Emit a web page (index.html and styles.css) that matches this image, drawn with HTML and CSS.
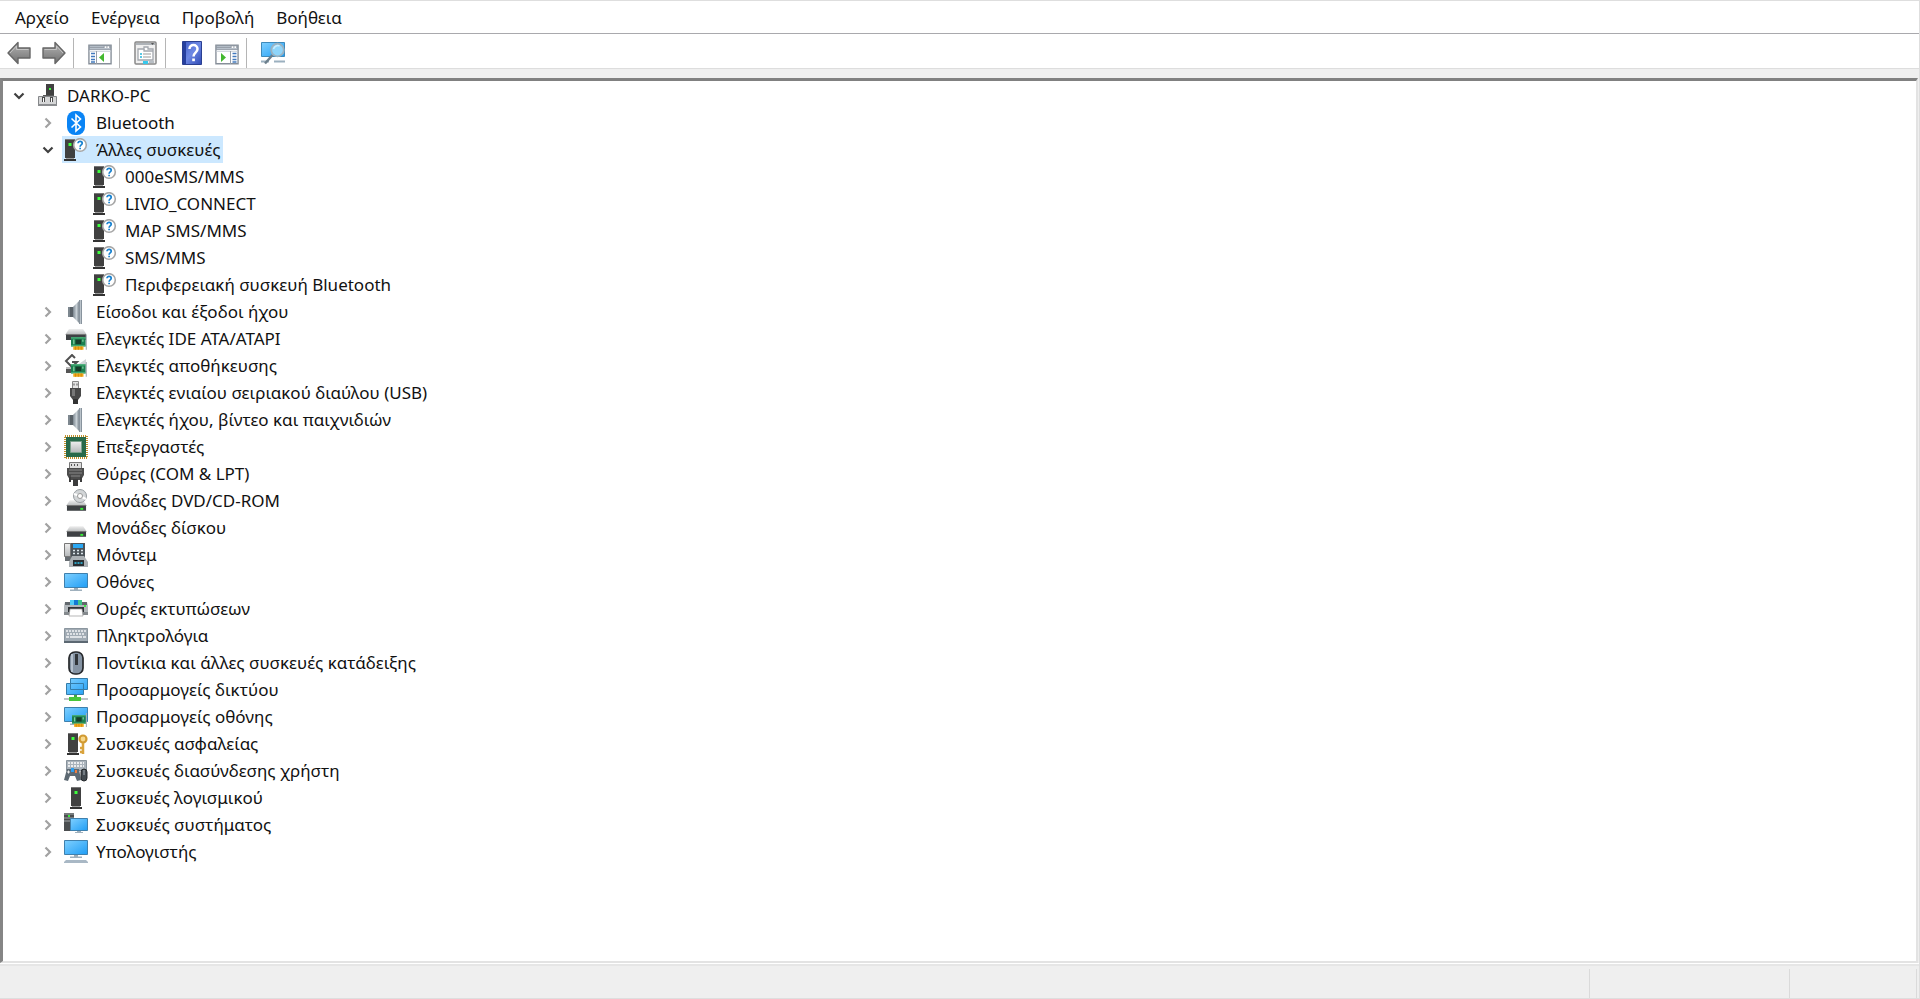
FILE: index.html
```
<!DOCTYPE html>
<html lang="el">

<head>
    <meta charset="UTF-8">
    <meta name="viewport" content="width=device-width, initial-scale=1.0">
    <title>Διαχείριση Συσκευών</title>
    <link rel="stylesheet" href="styles.css">
</head>

<body>

    <!-- shared shapes -->
    <svg class="defs" aria-hidden="true">
        <defs>
            <linearGradient id="blue" x1="0" y1="0" x2="1" y2="1">
                <stop offset="0" stop-color="#7fd0ff" />
                <stop offset="1" stop-color="#1f9df5" />
            </linearGradient>
            <linearGradient id="grey" x1="0" y1="0" x2="0" y2="1">
                <stop offset="0" stop-color="#b4b4b4" />
                <stop offset="1" stop-color="#707070" />
            </linearGradient>
            <linearGradient id="metal" x1="0" y1="0" x2="1" y2="0">
                <stop offset="0" stop-color="#7b868f" />
                <stop offset=".5" stop-color="#c8d0d6" />
                <stop offset="1" stop-color="#65717b" />
            </linearGradient>
            <linearGradient id="light" x1="0" y1="0" x2="0" y2="1">
                <stop offset="0" stop-color="#eeeeee" />
                <stop offset="1" stop-color="#b5b8ba" />
            </linearGradient>
            <linearGradient id="book" x1="0" y1="0" x2="1" y2="1">
                <stop offset="0" stop-color="#3f5cc4" />
                <stop offset=".5" stop-color="#6d88e4" />
                <stop offset="1" stop-color="#2e49b4" />
            </linearGradient>
            <symbol id="arrow" viewBox="0 0 24 24">
                <path d="M1 12 11 1.500V7h12v10H11v5.500Z" fill="url(#grey)" stroke="#666" stroke-width="1.400" stroke-linejoin="round" />
                <path d="M3 12 9.500 5v3.500H21.500" fill="none" stroke="#c4c4c4" />
            </symbol>
            <symbol id="closed" viewBox="0 0 12 12">
                <path d="M3.500 1.500 8 6l-4.500 4.500" fill="none" stroke="#a2a2a2" stroke-width="2.200" />
            </symbol>
            <symbol id="open" viewBox="0 0 12 12">
                <path d="M1.500 3.500 6 8l4.500-4.500" fill="none" stroke="#404040" stroke-width="2.200" />
            </symbol>
            <symbol id="tower" viewBox="0 0 12 24">
                <path d="M1 1h10v19H1z" fill="#404040" />
                <path d="M1 1h10v1H1z" fill="#777" />
                <path d="M0 21h12v2H0z" fill="#333" />
                <path d="M2 20h8v1H2z" fill="#999" />
                <path d="M4.500 5h3v3h-3z" fill="#3dff3d" />
            </symbol>
            <symbol id="unknown" viewBox="0 0 24 24">
                <use href="#tower" x="0" y="0" width="12" height="24" />
                <circle cx="16" cy="7" r="6.300" fill="#fff" stroke="#a6a6a6" stroke-width="1.600" />
                <path d="M14 5.300c0-2.600 4.200-2.500 4.200 0 0 1.700-2.100 1.600-2.100 3.400M16.100 9.700v1.500" fill="none" stroke="#1580cf" stroke-width="1.700" />
            </symbol>
            <symbol id="speaker" viewBox="0 0 24 24">
                <path d="M4 7h6v10H4z" fill="#596168" />
                <path d="M4 7h2v10H4z" fill="#7d878f" />
                <path d="M9 7 16 0v24l-7-7Z" fill="url(#metal)" />
                <path d="M15 0h3v24h-3z" fill="#88939d" />
                <path d="M16 0h1v24h-1z" fill="#bac3ca" />
            </symbol>
            <symbol id="card" viewBox="0 0 15 14">
                <path d="M0 2h13v8H0z" fill="#1c8050" />
                <path d="M0 2h13v1H0zM0 9h13v1H0z" fill="#4db57d" />
                <path d="M4 4h5v4H4z" fill="#173d2a" />
                <path d="M2 4h1v4H2zM10 4h1v2h-1z" fill="#8fd8a9" />
                <path d="M2 10h9v3H2z" fill="#f0a719" />
                <path d="M4 10v3M6.500 10v3M9 10v3" stroke="#c97d00" stroke-width=".6" />
                <path d="M13 0h1v13h-1z" fill="#a8b1b7" />
            </symbol>
            <symbol id="monitor" viewBox="0 0 24 18">
                <path d="M.5.5h23v14H.5z" fill="url(#blue)" stroke="#3f80ad" />
                <path d="M10 15h4v2h-4z" fill="#9eabb5" />
                <path d="M6 16.500h12v1.500H6z" fill="#9fb0bd" />
            </symbol>
            <symbol id="drive" viewBox="0 0 22 12">
                <path d="M4 0h14l4 6H0Z" fill="url(#light)" />
                <path d="M1 5h20v6H1z" fill="#3e4144" />
                <path d="M1 5h20v1H1z" fill="#777" />
                <path d="M15 8h3v2h-3z" fill="#36ee36" />
            </symbol>
            <symbol id="pane" viewBox="0 0 26 22">
                <path d="M1 1h24v20H1z" fill="#fff" stroke="#878f99" stroke-width="1.500" />
                <path d="M1 1h24v5H1z" fill="#929aa5" />
                <path d="M2 2.500h15M2 4.500h22" stroke="#bcc4ce" />
                <path d="M18 2h2v2h-2zM21 2h2v2h-2z" fill="#fff" />
                <path d="M1 7.500h24" stroke="#c2c9d1" />
            </symbol>
        </defs>
    </svg>

    <nav class="menubar">
        <button>Αρχείο</button>
        <button>Ενέργεια</button>
        <button>Προβολή</button>
        <button>Βοήθεια</button>
    </nav>

    <div class="toolbar">
        <button aria-label="Πίσω"><svg viewBox="0 0 24 24"><use href="#arrow" /></svg></button>
        <button aria-label="Εμπρός"><svg viewBox="0 0 24 24"><use href="#arrow" transform="matrix(-1 0 0 1 24 0)" /></svg></button>
        <span class="sep"></span>
        <button aria-label="Εμφάνιση δέντρου κονσόλας">
            <svg viewBox="0 0 24 24">
                <use href="#pane" x="0" y="3" width="24" height="21" />
                <path d="M8.500 10v13" stroke="#98a0aa" />
                <path d="M3 12.500h4M3 15.500h4M3 18.500h4M3 21h4" stroke="#4279bd" stroke-width="1.400" />
                <path d="M16 12v9l-5-4.500Z" fill="#43b82f" />
            </svg>
        </button>
        <span class="sep"></span>
        <button aria-label="Ιδιότητες">
            <svg viewBox="0 0 24 24">
                <rect x="1" y="1" width="21" height="22" rx="1" fill="#f0f0f0" stroke="#888" stroke-width="1.500" />
                <path d="M2 2h19v2H2z" fill="#aeb3b8" />
                <path d="m17 2 3 0-1.500 2Z" fill="#555" />
                <path d="M4 8h6V6h4v2h5v11H4z" fill="#fff" stroke="#a2a7ad" stroke-width="1.300" />
                <path d="M10 8v2h9" fill="none" stroke="#a2a7ad" stroke-width="1.300" />
                <path d="M6 13h2M6 16h2" stroke="#27b5da" stroke-width="1.500" />
                <path d="M9 13h8M9 16h8" stroke="#999" stroke-width="1.200" />
                <path d="M9 20h5v3H9z" fill="#37c8ec" />
                <path d="M15 20h5v2h-5z" fill="#b8bec4" />
            </svg>
        </button>
        <span class="sep"></span>
        <button aria-label="Βοήθεια">
            <svg viewBox="0 0 24 24">
                <path d="M2.500.5h19v23h-19z" fill="url(#book)" stroke="#2a3f91" />
                <path d="M3 1h3v22H3z" fill="#263f9e" />
                <path d="M9.500 8c0-5.500 8-5 8 0 0 3.800-4 3.500-4 7.500" fill="none" stroke="#fff" stroke-width="2.500" />
                <path d="M12.200 17.500h2.700v2.700h-2.700z" fill="#fff" />
            </svg>
        </button>
        <button aria-label="Εμφάνιση παραθύρου ενεργειών">
            <svg viewBox="0 0 24 24">
                <use href="#pane" x="0" y="3" width="24" height="21" />
                <path d="M15.500 10v13" stroke="#98a0aa" />
                <path d="M17.500 12.500h4M17.500 15.500h4M17.500 18.500h4M17.500 21h4" stroke="#4279bd" stroke-width="1.400" />
                <path d="M6 12v9l5-4.500Z" fill="#43b82f" />
            </svg>
        </button>
        <span class="sep"></span>
        <button aria-label="Σάρωση για αλλαγές υλικού">
            <svg viewBox="0 0 24 24">
                <path d="M.5 1.500h23v14H.5z" fill="url(#blue)" stroke="#3d8abb" />
                <path d="M0 20.500h8M13 20.500h11" stroke="#9bb0bf" stroke-width="2" />
                <path d="M11.500 14 4 22.500" stroke="#6d7f8c" stroke-width="2.500" />
                <circle cx="16.500" cy="9" r="6.300" fill="#8fd5fa" stroke="#9bb2c0" stroke-width="1.800" />
                <path d="M12.500 8c1-3 4-4 6-3" fill="none" stroke="#c9edff" stroke-width="1.500" />
            </svg>
        </button>
    </div>

    <main class="tree">
        <ul>
            <li>
                <div class="row">
                    <button class="toggle" aria-expanded="true" aria-label="DARKO-PC"><svg><use href="#open" /></svg></button>
                    <span class="node">
                        <svg viewBox="0 0 24 24">
                            <path d="M11 0h8v12h-8z" fill="#414141" />
                            <path d="M14 4h2v2h-2z" fill="#3dff3d" />
                            <path d="M8 11h11v3H8z" fill="#555" />
                            <path d="M3.500 12.500h18v9h-18z" fill="#d5d6d7" stroke="#85878a" />
                            <path d="M3 20h19v2H3z" fill="#8b8d90" />
                            <path d="M7 13h3v5H7zM15 13h3v5h-3z" fill="#4a4a4a" />
                            <path d="M8 14h1v4H8zM16 14h1v4h-1z" fill="#fff" />
                        </svg>
                        DARKO-PC
                    </span>
                </div>
                <ul>
                    <li>
                        <div class="row">
                            <button class="toggle" aria-expanded="false" aria-label="Bluetooth"><svg><use href="#closed" /></svg></button>
                            <span class="node">
                                <svg viewBox="0 0 24 24">
                                    <rect x="3" y="0" width="18" height="24" rx="8" fill="#0a84f5" />
                                    <path d="m7.500 7.500 9 8.500-4.500 4V4l4.500 4-9 8.500" fill="none" stroke="#fff" stroke-width="1.600" />
                                </svg>
                                Bluetooth
                            </span>
                        </div>
                    </li>
                    <li>
                        <div class="row">
                            <button class="toggle" aria-expanded="true" aria-label="Άλλες συσκευές"><svg><use href="#open" /></svg></button>
                            <span class="node selected"><svg><use href="#unknown" /></svg>Άλλες συσκευές</span>
                        </div>
                        <ul>
                            <li class="row leaf"><span class="node"><svg><use href="#unknown" /></svg>000eSMS/MMS</span></li>
                            <li class="row leaf"><span class="node"><svg><use href="#unknown" /></svg>LIVIO_CONNECT</span></li>
                            <li class="row leaf"><span class="node"><svg><use href="#unknown" /></svg>MAP SMS/MMS</span></li>
                            <li class="row leaf"><span class="node"><svg><use href="#unknown" /></svg>SMS/MMS</span></li>
                            <li class="row leaf"><span class="node"><svg><use href="#unknown" /></svg>Περιφερειακή συσκευή Bluetooth</span></li>
                        </ul>
                    </li>
                    <li class="row">
                        <button class="toggle" aria-expanded="false" aria-label="Είσοδοι και έξοδοι ήχου"><svg><use href="#closed" /></svg></button>
                        <span class="node"><svg><use href="#speaker" /></svg>Είσοδοι και έξοδοι ήχου</span>
                    </li>
                    <li class="row">
                        <button class="toggle" aria-expanded="false" aria-label="Ελεγκτές IDE ATA/ATAPI"><svg><use href="#closed" /></svg></button>
                        <span class="node">
                            <svg viewBox="0 0 24 24">
                                <use href="#drive" x="1" y="2" width="22" height="12" />
                                <use href="#card" x="7" y="8" width="17" height="16" />
                            </svg>
                            Ελεγκτές IDE ATA/ATAPI
                        </span>
                    </li>
                    <li class="row">
                        <button class="toggle" aria-expanded="false" aria-label="Ελεγκτές αποθήκευσης"><svg><use href="#closed" /></svg></button>
                        <span class="node">
                            <svg viewBox="0 0 24 24">
                                <path d="M2 14h9v5H2z" fill="#555" />
                                <path d="M2 13h9v2H2z" fill="#bbb" />
                                <path d="m11 4-3-3-6 6 6 6 5-5H8" fill="none" stroke="#505050" stroke-width="2" />
                                <path d="M12 12 22 5v5l-9 6Z" fill="#d0d5d8" />
                                <use href="#card" x="7" y="8" width="17" height="16" />
                            </svg>
                            Ελεγκτές αποθήκευσης
                        </span>
                    </li>
                    <li class="row">
                        <button class="toggle" aria-expanded="false" aria-label="Ελεγκτές ενιαίου σειριακού διαύλου (USB)"><svg><use href="#closed" /></svg></button>
                        <span class="node">
                            <svg viewBox="0 0 24 24">
                                <path d="M8.500.5h6v7h-6z" fill="#e5e5e5" stroke="#888" />
                                <path d="M9.500 2.500h1v2h-1zM12.500 2.500h1v2h-1z" fill="#555" />
                                <path d="M6 7h11v8l-3 4h-5l-3-4Z" fill="#484848" />
                                <path d="M8 8h3v7H8z" fill="#777" />
                                <path d="M9 18h5v5H9z" fill="#333" />
                            </svg>
                            Ελεγκτές ενιαίου σειριακού διαύλου (USB)
                        </span>
                    </li>
                    <li class="row">
                        <button class="toggle" aria-expanded="false" aria-label="Ελεγκτές ήχου, βίντεο και παιχνιδιών"><svg><use href="#closed" /></svg></button>
                        <span class="node"><svg><use href="#speaker" /></svg>Ελεγκτές ήχου, βίντεο και παιχνιδιών</span>
                    </li>
                    <li class="row">
                        <button class="toggle" aria-expanded="false" aria-label="Επεξεργαστές"><svg><use href="#closed" /></svg></button>
                        <span class="node">
                            <svg viewBox="0 0 24 24">
                                <rect x="1" y="1" width="22" height="22" fill="none" stroke="#c08f2c" stroke-width="2" stroke-dasharray="1 1" />
                                <path d="M2 2h20v20H2z" fill="#28694a" />
                                <path d="M6.500 6.500h11v11h-11z" fill="url(#light)" stroke="#7da18d" />
                            </svg>
                            Επεξεργαστές
                        </span>
                    </li>
                    <li class="row">
                        <button class="toggle" aria-expanded="false" aria-label="Θύρες (COM &amp; LPT)"><svg><use href="#closed" /></svg></button>
                        <span class="node">
                            <svg viewBox="0 0 24 24">
                                <path d="M5.500.5h12v6h-12z" fill="#ddd" stroke="#777" />
                                <path d="M7 2h1v2H7zM10 2h1v2h-1zM13 2h1v2h-1z" fill="#555" />
                                <path d="M3 6h17v7l-3 5H6l-3-5Z" fill="#4c4c4c" />
                                <path d="M5 8h13M5 11h13M7 14h9" stroke="#888" />
                                <path d="M5 15h2v5H5zM16 15h2v5h-2zM9 17h5v7H9z" fill="#3c3c3c" />
                            </svg>
                            Θύρες (COM &amp; LPT)
                        </span>
                    </li>
                    <li class="row">
                        <button class="toggle" aria-expanded="false" aria-label="Μονάδες DVD/CD-ROM"><svg><use href="#closed" /></svg></button>
                        <span class="node">
                            <svg viewBox="0 0 24 24">
                                <use href="#drive" x="2" y="11" width="21" height="12" />
                                <circle cx="16" cy="7" r="6.500" fill="#d2d5d7" stroke="#979ca0" />
                                <path d="m16 7-6-2M16 7l6 3" stroke="#fff" stroke-width="2" />
                                <circle cx="16" cy="7" r="2.500" fill="#fff" stroke="#999" />
                            </svg>
                            Μονάδες DVD/CD-ROM
                        </span>
                    </li>
                    <li class="row">
                        <button class="toggle" aria-expanded="false" aria-label="Μονάδες δίσκου"><svg><use href="#closed" /></svg></button>
                        <span class="node"><svg viewBox="0 0 24 24"><use href="#drive" x="2" y="10" width="21" height="12" /></svg>Μονάδες δίσκου</span>
                    </li>
                    <li class="row">
                        <button class="toggle" aria-expanded="false" aria-label="Μόντεμ"><svg><use href="#closed" /></svg></button>
                        <span class="node">
                            <svg viewBox="0 0 24 24">
                                <path d="M6 0h15v15H6z" fill="#4c5359" />
                                <path d="M.5.5h6v13h-6z" fill="url(#light)" stroke="#777" />
                                <path d="M1 14h6v4H1z" fill="#666c71" />
                                <path d="M9 1h10v4H9z" fill="#2aa8f4" />
                                <path d="M9 7.500h10M9 10.500h10" stroke="#dbe5eb" stroke-width="1.500" stroke-dasharray="2 2" />
                                <path d="M8 13h12l4 6v5H5v-5Z" fill="#abb0b4" />
                                <path d="M9 17h11v6H9z" fill="#292d30" />
                                <path d="M10.500 20h8" stroke="#32c5ee" stroke-width="1.500" stroke-dasharray="2 1" />
                            </svg>
                            Μόντεμ
                        </span>
                    </li>
                    <li class="row">
                        <button class="toggle" aria-expanded="false" aria-label="Οθόνες"><svg><use href="#closed" /></svg></button>
                        <span class="node"><svg viewBox="0 0 24 24"><use href="#monitor" x="0" y="3" width="24" height="18" /></svg>Οθόνες</span>
                    </li>
                    <li class="row">
                        <button class="toggle" aria-expanded="false" aria-label="Ουρές εκτυπώσεων"><svg><use href="#closed" /></svg></button>
                        <span class="node">
                            <svg viewBox="0 0 24 24">
                                <path d="M1 5h22l1 4v9H0V9Z" fill="#b2b7bb" />
                                <path d="M1 5h22v3H1z" fill="#62686d" />
                                <path d="M0 15h24v3H0z" fill="#84898d" />
                                <path d="M6 3h4v5H6z" fill="#51cdf4" />
                                <path d="M10 3h4v5h-4z" fill="#1478d4" />
                                <path d="M14 3h4v5h-4z" fill="#3fc78a" />
                                <path d="M4 10h16v5H4z" fill="#303438" />
                                <path d="M6 12h12l1 7H5Z" fill="#fff" stroke="#999" stroke-width=".7" />
                                <path d="M20 8h2v2h-2z" fill="#38ec43" />
                            </svg>
                            Ουρές εκτυπώσεων
                        </span>
                    </li>
                    <li class="row">
                        <button class="toggle" aria-expanded="false" aria-label="Πληκτρολόγια"><svg><use href="#closed" /></svg></button>
                        <span class="node">
                            <svg viewBox="0 0 24 24">
                                <path d="M.5 4.500h23v13H.5z" fill="#a1abb4" stroke="#8b969f" />
                                <path d="M0 17h24v2H0z" fill="#5c6872" />
                                <path d="M2 7h20M3 10h18" stroke="#f2f4f5" stroke-width="1.500" stroke-dasharray="2 1" />
                                <path d="M2 13h3M6 13h12M19 13h3" stroke="#f2f4f5" stroke-width="1.500" />
                            </svg>
                            Πληκτρολόγια
                        </span>
                    </li>
                    <li class="row">
                        <button class="toggle" aria-expanded="false" aria-label="Ποντίκια και άλλες συσκευές κατάδειξης"><svg><use href="#closed" /></svg></button>
                        <span class="node">
                            <svg viewBox="0 0 24 24">
                                <rect x="5" y="1" width="14" height="22" rx="6" fill="#8593a3" stroke="#26282b" stroke-width="1.700" />
                                <path d="M8 3v18" stroke="#b4c0cd" stroke-width="2" />
                                <path d="M11 3h3v11h-3z" fill="#303438" />
                            </svg>
                            Ποντίκια και άλλες συσκευές κατάδειξης
                        </span>
                    </li>
                    <li class="row">
                        <button class="toggle" aria-expanded="false" aria-label="Προσαρμογείς δικτύου"><svg><use href="#closed" /></svg></button>
                        <span class="node">
                            <svg viewBox="0 0 24 24">
                                <path d="M6.500.5h17v11h-17zM2.500 5.500h17v11h-17z" fill="url(#blue)" stroke="#347ca9" />
                                <path d="M10 17h3v3h-3z" fill="#46a83f" />
                                <path d="M0 20h24v2H0z" fill="#bdc4c8" />
                                <path d="M5 19h12v4H5z" fill="#49c63b" />
                            </svg>
                            Προσαρμογείς δικτύου
                        </span>
                    </li>
                    <li class="row">
                        <button class="toggle" aria-expanded="false" aria-label="Προσαρμογείς οθόνης"><svg><use href="#closed" /></svg></button>
                        <span class="node">
                            <svg viewBox="0 0 24 24">
                                <use href="#monitor" x="0" y="2" width="24" height="18" />
                                <use href="#card" x="8" y="8" width="16" height="15" />
                            </svg>
                            Προσαρμογείς οθόνης
                        </span>
                    </li>
                    <li class="row">
                        <button class="toggle" aria-expanded="false" aria-label="Συσκευές ασφαλείας"><svg><use href="#closed" /></svg></button>
                        <span class="node">
                            <svg viewBox="0 0 24 24">
                                <use href="#tower" x="3" y="0" width="12" height="24" />
                                <circle cx="19" cy="7" r="3.500" fill="#f7d88b" stroke="#d19a32" stroke-width="2.200" />
                                <path d="M19 11v11M19 16h-3M19 20h-3" fill="none" stroke="#d9a33c" stroke-width="2.500" />
                            </svg>
                            Συσκευές ασφαλείας
                        </span>
                    </li>
                    <li class="row">
                        <button class="toggle" aria-expanded="false" aria-label="Συσκευές διασύνδεσης χρήστη"><svg><use href="#closed" /></svg></button>
                        <span class="node">
                            <svg viewBox="0 0 24 24">
                                <path d="M2.500 1.500h20v10h-20z" fill="#aab3bb" stroke="#87929b" />
                                <path d="M4 4h16M4 7h16" stroke="#fff" stroke-width="1.500" stroke-dasharray="2 1" />
                                <path d="M3 10h12l2 11-4 1-2-5H6l-2 5-4-1Z" fill="#5d6973" />
                                <path d="M3 13h3M4.500 11.500v3" stroke="#eee" />
                                <path d="M7 9h3v4H7z" fill="#2d9def" />
                                <path d="M11 11h2v3h-2z" fill="#ed7d42" />
                                <rect x="17" y="10" width="6" height="12" rx="3" fill="#42494f" stroke="#25292c" />
                                <path d="M20 11v5" stroke="#a7b1b9" />
                            </svg>
                            Συσκευές διασύνδεσης χρήστη
                        </span>
                    </li>
                    <li class="row">
                        <button class="toggle" aria-expanded="false" aria-label="Συσκευές λογισμικού"><svg><use href="#closed" /></svg></button>
                        <span class="node"><svg viewBox="0 0 24 24"><use href="#tower" x="6" y="0" width="12" height="24" /></svg>Συσκευές λογισμικού</span>
                    </li>
                    <li class="row">
                        <button class="toggle" aria-expanded="false" aria-label="Συσκευές συστήματος"><svg><use href="#closed" /></svg></button>
                        <span class="node">
                            <svg viewBox="0 0 24 24">
                                <path d="M0 0h10v18H0z" fill="#4b4e50" />
                                <path d="M0 1h10M0 5h10M0 8h10" stroke="#a4a8aa" />
                                <path d="M4 2h2v2H4z" fill="#3deb3d" />
                                <path d="M6.500 5.500h17v12h-17z" fill="url(#blue)" stroke="#3f80ad" />
                                <path d="M13 18h4v1h2v1h-8v-1h2z" fill="#9fb0bd" />
                            </svg>
                            Συσκευές συστήματος
                        </span>
                    </li>
                    <li class="row">
                        <button class="toggle" aria-expanded="false" aria-label="Υπολογιστής"><svg><use href="#closed" /></svg></button>
                        <span class="node">
                            <svg viewBox="0 0 24 24">
                                <use href="#monitor" x="0" y="0" width="24" height="18" />
                                <path d="M2 20h20l2 2v1H0v-1Z" fill="#a9b8c5" />
                            </svg>
                            Υπολογιστής
                        </span>
                    </li>
                </ul>
            </li>
        </ul>
    </main>

    <footer class="statusbar">
        <span class="main-cell"></span>
        <span class="info-cell"></span>
        <span class="end-cell"></span>
    </footer>

</body>

</html>
```
FILE: styles.css
```
* {
    margin: 0;
    padding: 0;
    box-sizing: border-box;
}

body {
    height: 100vh;
    display: flex;
    flex-direction: column;
    background-color: #efefef;
    border: 1px solid #dedede;
    border-width: 1px 1px 1px 0;
    color: #111111;
    font-family: "Noto Sans", "Open Sans", sans-serif;
    font-size: 17px;
    line-height: 27px;
}

ul {
    list-style: none;
}

button {
    border: none;
    background: none;
    color: inherit;
    font: inherit;
}

.defs {
    position: absolute;
    width: 0;
    height: 0;
}

.menubar {
    display: flex;
    height: 33px;
    padding: 0 4px;
    background-color: white;
    border-bottom: 1px solid #a9a9ad;
}

.menubar button {
    padding: 0 11px;
}

.menubar button:hover {
    background-color: #e5f3ff;
}

.toolbar {
    display: flex;
    align-items: center;
    gap: 1px;
    height: 35px;
    padding: 3px 2px 0;
    background-color: white;
    border-bottom: 1px solid #dddddd;
}

.toolbar button {
    display: flex;
    justify-content: center;
    align-items: center;
    width: 34px;
    height: 30px;
}

.toolbar svg,
.node svg {
    width: 24px;
    height: 24px;
    flex: none;
}

.sep {
    width: 1px;
    height: 30px;
    margin: 0 8px 0 1px;
    background-color: #b5b5b5;
}

.tree {
    flex: 1;
    min-height: 0;
    margin: 9px 1px 0 0;
    padding: 1px 0 0 4px;
    overflow: auto;
    background-color: white;
    border-style: solid;
    border-width: 3px 2px 2px 3px;
    border-color: #808080 #e3e3e3 #e3e3e3 #858585;
}

.tree ul ul {
    padding-left: 29px;
}

.row {
    display: flex;
    gap: 2px;
    height: 27px;
}

.leaf {
    padding-left: 26px;
}

.toggle {
    display: flex;
    justify-content: center;
    align-items: center;
    width: 24px;
}

.toggle svg {
    width: 12px;
    height: 12px;
}

.node {
    display: flex;
    align-items: center;
    gap: 8px;
    padding: 0 2px;
    white-space: nowrap;
}

.selected {
    background-color: #cce8ff;
}

.statusbar {
    display: flex;
    height: 34px;
    margin-top: 1px;
    padding: 3px 2px 0 0;
    border-top: 2px solid #e6e6e6;
    box-shadow: 0 -1px white;
}

.statusbar span {
    border-right: 1px solid #dadada;
}

.main-cell {
    flex: 1;
}

.info-cell {
    width: 200px;
}

.end-cell {
    width: 127px;
}
```
